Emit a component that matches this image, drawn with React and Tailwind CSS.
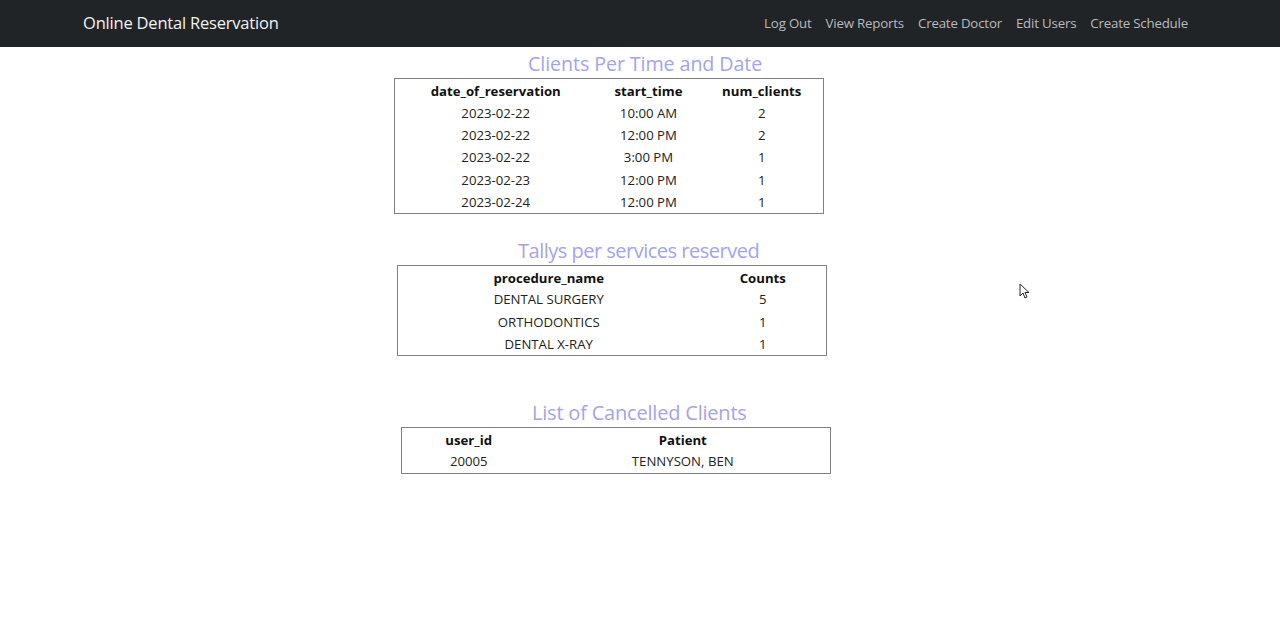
export default function App() {
  const font = { fontFamily: '"Open Sans", "Noto Sans", Arial, sans-serif' };
  const t1 = [
    ["2023-02-22", "10:00 AM", "2"],
    ["2023-02-22", "12:00 PM", "2"],
    ["2023-02-22", "3:00 PM", "1"],
    ["2023-02-23", "12:00 PM", "1"],
    ["2023-02-24", "12:00 PM", "1"],
  ];
  const t2 = [
    ["DENTAL SURGERY", "5"],
    ["ORTHODONTICS", "1"],
    ["DENTAL X-RAY", "1"],
  ];
  return (
    <div className="relative min-h-[632px] bg-white text-[#222]" style={font}>
      <nav className="h-[47px] bg-[#212427] flex items-center px-[83px] justify-between">
        <span className="text-[16.5px] text-[#f2f2f2] tracking-[-0.2px]">Online Dental Reservation</span>
        <div className="flex gap-[14px] text-[13.3px] text-[#b8babd] mr-[9px] tracking-[-0.2px]">
          <span>Log Out</span>
          <span>View Reports</span>
          <span>Create Doctor</span>
          <span>Edit Users</span>
          <span>Create Schedule</span>
        </div>
      </nav>

      <div className="flex flex-col">
        <h2 className="ml-[528px] mt-[3px] text-[19.7px] leading-[27px] text-[#a3a3ee] tracking-[-0.1px]">Clients Per Time and Date</h2>
        <table className="ml-[394px] w-[430px] border border-[#808080] text-[13.2px] text-center mt-[1px]">
          <tbody>
            <tr className="h-[24px] font-bold text-[#111]">
              <td className="w-[202px] pt-[3px]">date_of_reservation</td>
              <td className="w-[104px] pt-[3px]">start_time</td>
              <td className="pt-[3px]">num_clients</td>
            </tr>
            {t1.map((r, i) => (
              <tr key={i} className="h-[22.3px]">
                <td>{r[0]}</td><td>{r[1]}</td><td>{r[2]}</td>
              </tr>
            ))}
          </tbody>
        </table>

        <h2 className="ml-[518px] mt-[23px] text-[20px] leading-[27px] text-[#a3a3ee] tracking-[-0.5px]">Tallys per services reserved</h2>
        <table className="ml-[397px] w-[430px] border border-[#808080] text-[13.2px] text-center mt-[1px]">
          <tbody>
            <tr className="h-[23px] font-bold text-[#111]">
              <td className="w-[302px] pt-[2px]">procedure_name</td>
              <td className="pt-[2px]">Counts</td>
            </tr>
            {t2.map((r, i) => (
              <tr key={i} className="h-[22.3px]">
                <td>{r[0]}</td><td>{r[1]}</td>
              </tr>
            ))}
          </tbody>
        </table>

        <h2 className="ml-[532px] mt-[43px] text-[20px] leading-[27px] text-[#a3a3ee] tracking-[-0.2px]">List of Cancelled Clients</h2>
        <table className="ml-[401px] w-[430px] border border-[#808080] text-[13.2px] text-center mt-[1px]">
          <tbody>
            <tr className="h-[23px] font-bold text-[#111]">
              <td className="w-[134px] pt-[2px]">user_id</td>
              <td className="pt-[2px]">Patient</td>
            </tr>
            <tr className="h-[22.3px]">
              <td>20005</td><td>TENNYSON, BEN</td>
            </tr>
          </tbody>
        </table>
      </div>

      <svg className="absolute left-[1019px] top-[283px]" width="11" height="16" viewBox="0 0 11 16">
        <path d="M1 1 L1 13 L4 10 L6 15 L8 14 L6 9.5 L10 9.5 Z" fill="#fff" stroke="#222" strokeWidth="1" strokeLinejoin="round" />
      </svg>
    </div>
  );
}
